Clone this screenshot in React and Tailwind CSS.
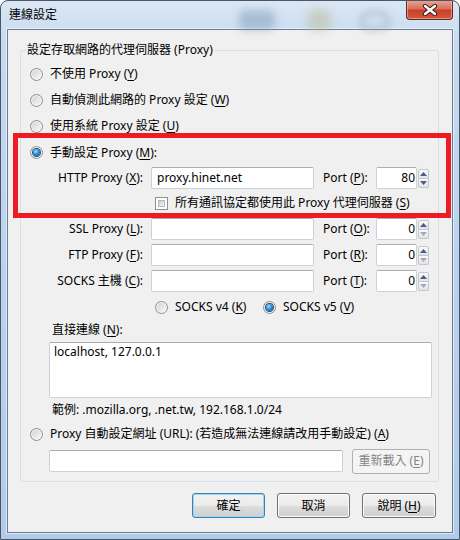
import React from "react";

function U({ children }) {
  return <span className="underline underline-offset-[2px] decoration-[1px]">{children}</span>;
}

function Radio({ checked }) {
  return (
    <span className="w-[13px] h-[13px] rounded-full border border-[#8e8f8f] bg-[linear-gradient(135deg,#d0d0d0,#fbfbfb)] flex items-center justify-center shrink-0 shadow-[inset_0_0_0_1px_#f4f4f4]">
      {checked && (
        <span className="w-[7px] h-[7px] rounded-full bg-[radial-gradient(circle_at_40%_35%,#a6e0ff_0%,#2c8fd6_45%,#0c3f70_100%)] shadow-[0_0_0_1px_#1d4f7a]" />
      )}
    </span>
  );
}

function Checkbox() {
  return (
    <span className="w-[13px] h-[13px] border border-[#8e8f8f] bg-white p-[2px] shrink-0 flex">
      <span className="flex-1 border border-[#b4b8bd] bg-[linear-gradient(135deg,#c9cdd3,#f6f6f6)]" />
    </span>
  );
}

function Input({ w, children, right }) {
  return (
    <div
      className={
        "h-[22px] border border-[#cdd0d6] border-t-[#abadb3] rounded-[2px] bg-white flex items-center " +
        (right ? "justify-end pr-[1px]" : "pl-[5px]")
      }
      style={{ width: w }}
    >
      {children}
    </div>
  );
}

function Arrow({ up, color }) {
  return (
    <svg width="7" height="4" viewBox="0 0 7 4">
      <path d={up ? "M3.5 0 L7 4 L0 4 Z" : "M0 0 L7 0 L3.5 4 Z"} fill={color} />
    </svg>
  );
}

function Spinner({ downDisabled }) {
  return (
    <div className="ml-[1px] w-[11px] h-[19px] flex flex-col">
      <div className="h-[10px] border border-[#c3c7cd] rounded-t-[2px] bg-gradient-to-b from-[#fbfbfb] to-[#e2e3e6] flex items-center justify-center">
        <Arrow up color="#4a5f85" />
      </div>
      <div className="h-[9px] border border-t-0 border-[#c3c7cd] rounded-b-[2px] bg-gradient-to-b from-[#fbfbfb] to-[#e2e3e6] flex items-center justify-center">
        <Arrow color={downDisabled ? "#a7a9ad" : "#4a5f85"} />
      </div>
    </div>
  );
}

function ProxyRow({ label, portLabel, value, port, h }) {
  return (
    <div className={"flex items-center " + h}>
      <div className="w-[122px] text-right whitespace-nowrap">{label}</div>
      <div className="ml-[8px]">
        <Input w={163}>{value}</Input>
      </div>
      <div className="ml-[9px] w-[53px] whitespace-nowrap">{portLabel}</div>
      <Input w={41} right>
        {port}
      </Input>
      <Spinner downDisabled={port === "0"} />
    </div>
  );
}

function Button({ children, def, disabled, w }) {
  return (
    <div
      className={
        "h-[25px] rounded-[3px] border flex items-center justify-center " +
        (def
          ? "border-[#3c7fb1] shadow-[inset_0_0_0_1px_#9fd5f3] bg-[linear-gradient(180deg,#f2f2f2_0%,#ebebeb_50%,#dddddd_51%,#cfcfcf_100%)]"
          : disabled
          ? "border-[#adb2b5] bg-[#f4f4f4] text-[#838383]"
          : "border-[#707070] shadow-[inset_0_0_0_1px_#fcfcfc] bg-[linear-gradient(180deg,#f2f2f2_0%,#ebebeb_50%,#dddddd_51%,#cfcfcf_100%)]")
      }
      style={{ width: w }}
    >
      {children}
    </div>
  );
}

export default function App() {
  return (
    <div className="relative w-[460px] h-[540px] flex flex-col border border-[#4a5668] rounded-t-[8px] overflow-hidden bg-[linear-gradient(180deg,#dbe7f4_0%,#c6daf0_8%,#b9d1ec_60%,#b2cbe8_100%)] text-[12px] leading-[16px] text-black font-['Noto_Sans','Noto_Sans_CJK_TC',sans-serif]">
      {/* title bar */}
      <div className="relative h-[28px] flex items-start justify-between shrink-0">
        <div className="absolute left-[238px] top-[9px] w-[36px] h-[20px] rounded-[6px] bg-[#7f9ab9] opacity-50 blur-[4px]" />
        <div className="absolute left-[306px] top-[8px] w-[24px] h-[22px] rounded-[8px] bg-[#b9bc97] opacity-50 blur-[4px]" />
        <div className="absolute left-[358px] top-[9px] w-[32px] h-[22px] rounded-full border-[6px] border-[#9ea6ae] opacity-40 blur-[3px]" />
        <div className="relative pl-[8px] pt-[6px]">連線設定</div>
        <div className="relative mr-[6px] -mt-[1px] w-[47px] h-[20px] rounded-b-[4px] border border-[#5c2a22] border-t-0 bg-[linear-gradient(180deg,#eaa899_0%,#d9705c_45%,#c5412b_55%,#d8573f_100%)] shadow-[inset_0_0_0_1px_rgba(255,210,200,0.5)] flex items-center justify-center">
          <svg width="16" height="12" viewBox="0 0 16 12">
            <path d="M3 2 L13 10 M13 2 L3 10" stroke="#3b1a15" strokeWidth="4.4" strokeLinecap="round" />
            <path d="M3 2 L13 10 M13 2 L3 10" stroke="#ffffff" strokeWidth="2.4" strokeLinecap="round" />
          </svg>
        </div>
      </div>

      {/* client area */}
      <div className="mx-[6px] mb-[6px] h-[504px] border border-[#6b7d94] bg-[#f0f0f0] shadow-[0_0_0_1px_rgba(255,255,255,0.55)] flex flex-col">
        <fieldset className="ml-[12px] mt-[12px] w-[419px] h-[440px] border border-[#d5dfe5] rounded-[3px]">
          <legend className="ml-[5px] px-[1px] leading-[16px]">設定存取網路的代理伺服器 (Proxy)</legend>
          <div className="pt-[3px] flex flex-col">
            <div className="h-[26px] flex items-center pl-[9px]">
              <Radio />
              <span className="ml-[7px]">
                不使用 Proxy (<U>Y</U>)
              </span>
            </div>
            <div className="h-[26px] flex items-center pl-[9px]">
              <Radio />
              <span className="ml-[7px]">
                自動偵測此網路的 Proxy 設定 (<U>W</U>)
              </span>
            </div>
            <div className="h-[26px] flex items-center pl-[9px]">
              <Radio />
              <span className="ml-[7px]">
                使用系統 Proxy 設定 (<U>U</U>)
              </span>
            </div>
            <div className="h-[27px] flex items-center pl-[9px]">
              <Radio checked />
              <span className="ml-[7px]">
                手動設定 Proxy (<U>M</U>):
              </span>
            </div>
            <ProxyRow
              h="h-[24px]"
              label={<>HTTP Proxy (<U>X</U>):</>}
              portLabel={<>Port (<U>P</U>):</>}
              value="proxy.hinet.net"
              port="80"
            />
            <div className="h-[26px] flex items-center pl-[134px]">
              <Checkbox />
              <span className="ml-[7px] whitespace-nowrap">
                所有通訊協定都使用此 Proxy 代理伺服器 (<U>S</U>)
              </span>
            </div>
            <ProxyRow
              h="h-[26px]"
              label={<>SSL Proxy (<U>L</U>):</>}
              portLabel={<>Port (<U>O</U>):</>}
              value=""
              port="0"
            />
            <ProxyRow
              h="h-[26px]"
              label={<>FTP Proxy (<U>F</U>):</>}
              portLabel={<>Port (<U>R</U>):</>}
              value=""
              port="0"
            />
            <ProxyRow
              h="h-[26px]"
              label={<>SOCKS 主機 (<U>C</U>):</>}
              portLabel={<>Port (<U>T</U>):</>}
              value=""
              port="0"
            />
            <div className="h-[26px] flex items-center pl-[134px]">
              <div className="w-[108px] flex items-center">
                <Radio />
                <span className="ml-[7px] whitespace-nowrap">
                  SOCKS v4 (<U>K</U>)
                </span>
              </div>
              <Radio checked />
              <span className="ml-[7px] whitespace-nowrap">
                SOCKS v5 (<U>V</U>)
              </span>
            </div>
            <div className="h-[20px] flex items-center pl-[31px]">
              直接連線 (<U>N</U>):
            </div>
            <div className="mt-[2px] ml-[28px] w-[383px] h-[56px] border border-[#cdd0d6] border-t-[#abadb3] rounded-[2px] bg-white pl-[4px] pt-[1px]">
              localhost, 127.0.0.1
            </div>
            <div className="mt-[2px] h-[20px] flex items-center pl-[31px]">
              範例: .mozilla.org, .net.tw, 192.168.1.0/24
            </div>
            <div className="mt-[4px] h-[20px] flex items-center pl-[9px]">
              <Radio />
              <span className="ml-[7px] whitespace-nowrap">
                Proxy 自動設定網址 (URL): (若造成無法連線請改用手動設定) (<U>A</U>)
              </span>
            </div>
            <div className="mt-[5px] h-[24px] flex items-center pl-[28px]">
              <Input w={294}></Input>
              <div className="ml-[9px]">
                <Button disabled w={78}>
                  重新載入 (<U>E</U>)
                </Button>
              </div>
            </div>
          </div>
        </fieldset>

        <div className="mt-[11px] flex justify-end gap-[12px] pr-[16px]">
          <Button def w={73}>
            確定
          </Button>
          <Button w={73}>取消</Button>
          <Button w={74}>
            說明 (<U>H</U>)
          </Button>
        </div>
      </div>

      {/* red annotation box */}
      <div className="absolute left-[12px] top-[132px] w-[438px] h-[85px] border-[5px] border-[#ed1c24]" />
    </div>
  );
}
